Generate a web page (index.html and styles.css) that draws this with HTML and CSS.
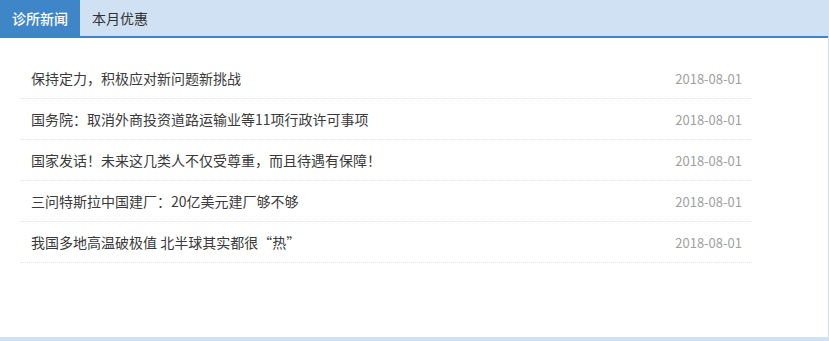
FILE: index.html
```html
<!DOCTYPE html>
<html lang="zh-CN">
<head>
    <meta charset="UTF-8">
    <meta name="viewport" content="width=device-width, initial-scale=1.0">
    <title>诊所新闻</title>
    <link rel="stylesheet" href="styles.css">
</head>
<body>
    <div class="news-box">
        <div class="tabs">
            <a href="#" class="tab active">诊所新闻</a>
            <a href="#" class="tab">本月优惠</a>
        </div>
        <div class="panel">
            <ul class="news-list">
                <li><a href="#">保持定力，积极应对新问题新挑战</a><span class="date">2018-08-01</span></li>
                <li><a href="#">国务院：取消外商投资道路运输业等11项行政许可事项</a><span class="date">2018-08-01</span></li>
                <li><a href="#">国家发话！未来这几类人不仅受尊重，而且待遇有保障！</a><span class="date">2018-08-01</span></li>
                <li><a href="#">三问特斯拉中国建厂：20亿美元建厂够不够</a><span class="date">2018-08-01</span></li>
                <li><a href="#">我国多地高温破极值 北半球其实都很“热”</a><span class="date">2018-08-01</span></li>
            </ul>
        </div>
    </div>
</body>
</html>
```

FILE: styles.css
```css
* {
    margin: 0;
    padding: 0;
    box-sizing: border-box;
}

body {
    font-family: "Noto Sans CJK SC", "Noto Sans", sans-serif;
    background: #ffffff;
}

.news-box {
    width: 829px;
    height: 341px;
    border-right: 1px solid #cfe1f2;
    border-bottom: 4px solid #cfe1f2;
    display: flex;
    flex-direction: column;
}

.tabs {
    display: flex;
    height: 38px;
    background: #cfe1f2;
    border-bottom: 2px solid #3f86c9;
}

.tab {
    display: block;
    height: 36px;
    line-height: 36px;
    padding: 0 12px;
    font-size: 14px;
    color: #333333;
    text-decoration: none;
}

.tab.active {
    height: 38px;
    margin-bottom: -2px;
    background: #3f86c9;
    color: #ffffff;
    font-weight: 500;
}

.panel {
    flex: 1;
    padding: 20px 0 0 20px;
}

.news-list {
    list-style: none;
    width: 732px;
}

.news-list li {
    display: flex;
    justify-content: space-between;
    align-items: center;
    height: 41px;
    padding: 0 10px 0 11px;
    border-bottom: 1px dotted #e3e3e3;
}

.news-list a {
    font-size: 14px;
    color: #3a3a3a;
    text-decoration: none;
}

.news-list a:hover {
    color: #3f86c9;
}

.date {
    font-size: 13px;
    color: #a0a0a0;
}
```
